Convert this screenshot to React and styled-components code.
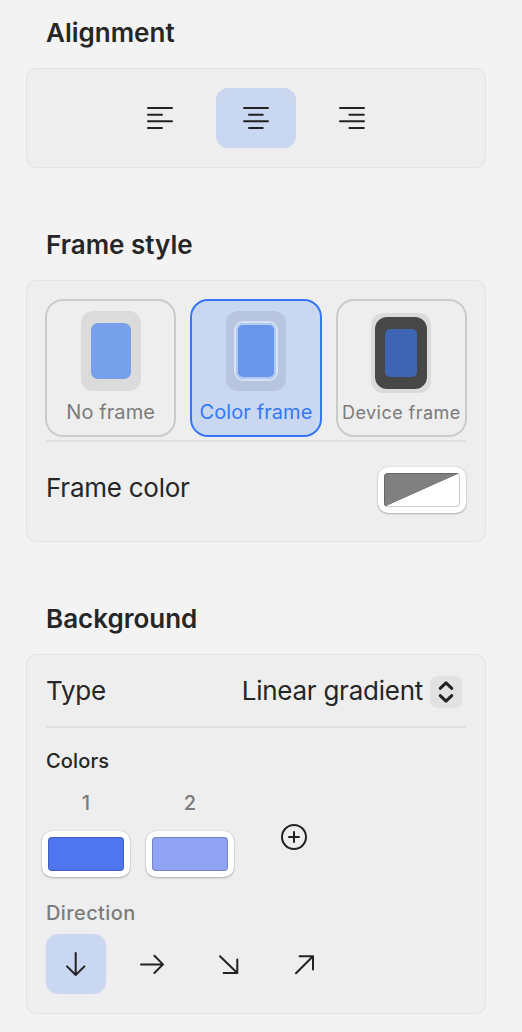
import React from 'react';
import styled, { createGlobalStyle } from 'styled-components';

const GlobalStyle = createGlobalStyle`
  *, *::before, *::after { box-sizing: border-box; }
  body {
    margin: 0;
    background: #f3f3f3;
    color: #262626;
    font-family: Inter, "Liberation Sans", sans-serif;
    font-size: 26px;
  }
  button { font: inherit; color: inherit; border: 0; padding: 0; background: none; }
`;

const Inspector = styled.main`
  display: flex;
  flex-direction: column;
  gap: 61px;
  width: 522px;
  height: 1032px;
  padding: 17px 36px 0 26px;
`;

const Section = styled.section`
  display: flex;
  flex-direction: column;
  gap: 19px;
`;

const SectionTitle = styled.h2`
  margin: 0;
  padding-left: 20px;
  font-size: 26px;
  line-height: 32px;
  font-weight: 600;
`;

const Panel = styled.div`
  display: flex;
  flex-direction: column;
  height: ${(p) => p.$height};
  padding: ${(p) => p.$padding || '0 19px'};
  border: 1px solid #e2e2e2;
  border-radius: 10px;
  background: #eeeeee;
`;

const ButtonRow = styled.div`
  display: flex;
  justify-content: ${(p) => p.$justify || 'flex-start'};
  gap: 16px;
  margin-top: ${(p) => p.$top || '0'};
`;

const IconButton = styled.button`
  display: flex;
  align-items: center;
  justify-content: center;
  width: ${(p) => p.$width};
  height: 60px;
  border-radius: 12px;
  background: ${(p) => (p.$active ? '#c9d7f1' : 'transparent')};
`;

const Glyph = styled.svg`
  display: block;
  fill: none;
  stroke: #222;
  stroke-width: ${(p) => p.$stroke || 2};
  stroke-linecap: round;
  stroke-linejoin: round;
`;

const TileGrid = styled.div`
  display: grid;
  grid-template-columns: repeat(3, 1fr);
  gap: 14px;
  height: 138px;
  margin: 0 -1px;
`;

const Tile = styled.button`
  display: flex;
  flex-direction: column;
  align-items: center;
  padding-top: ${(p) => p.$top || '10px'};
  border: 2px solid ${(p) => (p.$active ? '#3478f6' : '#cacaca')};
  border-radius: 18px;
  background: ${(p) => (p.$active ? '#c9d7f1' : 'transparent')};
  color: ${(p) => (p.$active ? '#3478f6' : '#7b7b7b')};
`;

const Thumb = styled.span`
  display: flex;
  align-items: center;
  justify-content: center;
  width: 60px;
  height: 80px;
  flex: none;
  border-radius: 12px;
  background: ${(p) => (p.$active ? '#b8c5de' : '#dbdbdb')};
`;

const PlainScreen = styled.span`
  width: 40px;
  height: 56px;
  border-radius: 7px;
  background: #76a0ea;
`;

const OutlinedScreen = styled.span`
  width: 44px;
  height: 60px;
  border: 2px solid #d7e1f3;
  border-radius: 9px;
  background: #6996eb;
  box-shadow: inset 0 0 0 2px #b1c9f6;
`;

const DeviceScreen = styled.span`
  width: 52px;
  height: 72px;
  border: 10px solid #474747;
  border-top-width: 12px;
  border-bottom-width: 12px;
  border-radius: 12px;
  background: #474747;
  display: flex;

  &::before {
    content: '';
    flex: 1;
    border-radius: 5px;
    background: #3e65b2;
  }
`;

const TileLabel = styled.span`
  margin-top: ${(p) => p.$top || '9px'};
  font-size: ${(p) => p.$size || '20px'};
  line-height: 24px;
  letter-spacing: ${(p) => p.$tracking || '0.1px'};
  white-space: nowrap;
`;

const Divider = styled.hr`
  flex: none;
  width: 100%;
  height: 2px;
  margin: ${(p) => p.$margin || '0'};
  border: 0;
  background: #e2e2e2;
`;

const SettingRow = styled.div`
  display: flex;
  align-items: center;
  justify-content: space-between;
  height: ${(p) => p.$height};
`;

const SettingLabel = styled.span`
  line-height: 32px;
  letter-spacing: -0.25px;
  padding-bottom: ${(p) => p.$lift || '0'};
`;

const Picker = styled.button`
  display: flex;
  align-items: center;
  gap: 7px;
  margin-right: 4px;
`;

const Stepper = styled.span`
  display: flex;
  align-items: center;
  justify-content: center;
  width: 32px;
  height: 32px;
  margin-top: 2px;
  border-radius: 7px;
  background: #e2e2e2;
`;

const Well = styled.button`
  display: flex;
  flex: none;
  width: 88px;
  height: 46px;
  padding: 6px;
  border-radius: 10px;
  background: #fff;
  box-shadow: 0 0 1px rgba(0, 0, 0, 0.3), 0 1px 2px rgba(0, 0, 0, 0.25);

  &::before {
    content: '';
    flex: 1;
    border: 1px solid rgba(0, 0, 0, 0.2);
    border-radius: 4px;
    background: ${(p) => p.$fill};
    background-origin: border-box;
  }
`;

const GroupLabel = styled.div`
  font-size: 20px;
  font-weight: 500;
  line-height: 24px;
  letter-spacing: ${(p) => p.$tracking || '0'};
  color: ${(p) => (p.$muted ? '#7c7c7c' : '#262626')};
`;

const Swatches = styled.div`
  display: flex;
  gap: 16px;
  margin: 18px 0 24px -4px;
`;

const Swatch = styled.div`
  display: flex;
  flex-direction: column;
  align-items: center;
  gap: 16px;
  width: 88px;
`;

const AddButton = styled.button`
  align-self: flex-start;
  width: 28px;
  height: 28px;
  margin: 32px 0 0 30px;
`;

const ALIGNMENTS = [
  { name: 'Align left', short: [1, 16.2] },
  { name: 'Align center', short: [6, 21], active: true },
  { name: 'Align right', short: [10.4, 26] },
];

const DIRECTIONS = [
  { name: 'Down', path: 'M13.7 3V25M5 16.4L13.7 25L22.4 16.4', active: true },
  { name: 'Right', path: 'M3 14.4H25M16.4 5.8L25 14.4L16.4 23' },
  { name: 'Down right', path: 'M6 6.2L23.3 23M23.3 9.5V23H9.6' },
  { name: 'Up right', path: 'M6 23.2L23 6.2M9.6 6.2H23V19.6' },
];

export default function App() {
  return (
    <>
      <GlobalStyle />
      <Inspector>
        <Section>
          <SectionTitle>Alignment</SectionTitle>
          <Panel $height="100px" $padding="19px">
            <ButtonRow $justify="center">
              {ALIGNMENTS.map(({ name, short: [from, to], active }) => (
                <IconButton key={name} $width="80px" $active={active} aria-label={name}>
                  <Glyph width="28" height="24" viewBox="0 0 28 24">
                    <path
                      d={`M2 2H26M${from + 1} 8.7H${to - 0.2}M2 15.3H26M${from + 1} 22H${to - 0.2}`}
                    />
                  </Glyph>
                </IconButton>
              ))}
            </ButtonRow>
          </Panel>
        </Section>

        <Section>
          <SectionTitle>Frame style</SectionTitle>
          <Panel $height="262px" $padding="18px 19px 0">
            <TileGrid>
              <Tile>
                <Thumb>
                  <PlainScreen />
                </Thumb>
                <TileLabel>No frame</TileLabel>
              </Tile>
              <Tile $active>
                <Thumb $active>
                  <OutlinedScreen />
                </Thumb>
                <TileLabel>Color frame</TileLabel>
              </Tile>
              <Tile $top="12px">
                <Thumb>
                  <DeviceScreen />
                </Thumb>
                <TileLabel $size="18px" $top="8px" $tracking="0.45px">
                  Device frame
                </TileLabel>
              </Tile>
            </TileGrid>
            <Divider $margin="3px 0 0" />
            <SettingRow $height="96px">
              <SettingLabel $lift="4px">Frame color</SettingLabel>
              <Well
                aria-label="Frame color"
                $fill="linear-gradient(to bottom right, #808080 49.6%, #ffffff 50.4%)"
              />
            </SettingRow>
          </Panel>
        </Section>

        <Section>
          <SectionTitle>Background</SectionTitle>
          <Panel $height="360px">
            <SettingRow $height="71px">
              <SettingLabel>Type</SettingLabel>
              <Picker>
                <SettingLabel>Linear gradient</SettingLabel>
                <Stepper>
                  <Glyph $stroke={3} width="18" height="26" viewBox="0 0 18 26">
                    <path d="M3.2 9.3L9 3.8L14.8 9.3M3.2 16.7L9 22.2L14.8 16.7" />
                  </Glyph>
                </Stepper>
              </Picker>
            </SettingRow>
            <Divider $margin="0 0 21px" />
            <GroupLabel $tracking="0.15px">Colors</GroupLabel>
            <Swatches>
              <Swatch>
                <GroupLabel $muted>1</GroupLabel>
                <Well aria-label="Color 1" $fill="#4f76ef" />
              </Swatch>
              <Swatch>
                <GroupLabel $muted>2</GroupLabel>
                <Well aria-label="Color 2" $fill="#91a4f3" />
              </Swatch>
              <AddButton aria-label="Add color">
                <Glyph width="28" height="28" viewBox="0 0 28 28">
                  <circle cx="14" cy="14" r="12" />
                  <path d="M14 9V19M9 14H19" />
                </Glyph>
              </AddButton>
            </Swatches>
            <GroupLabel $muted $tracking="0.4px">
              Direction
            </GroupLabel>
            <ButtonRow $top="9px">
              {DIRECTIONS.map(({ name, path, active }) => (
                <IconButton key={name} $width="60px" $active={active} aria-label={name}>
                  <Glyph width="28" height="28" viewBox="0 0 28 28">
                    <path d={path} />
                  </Glyph>
                </IconButton>
              ))}
            </ButtonRow>
          </Panel>
        </Section>
      </Inspector>
    </>
  );
}
